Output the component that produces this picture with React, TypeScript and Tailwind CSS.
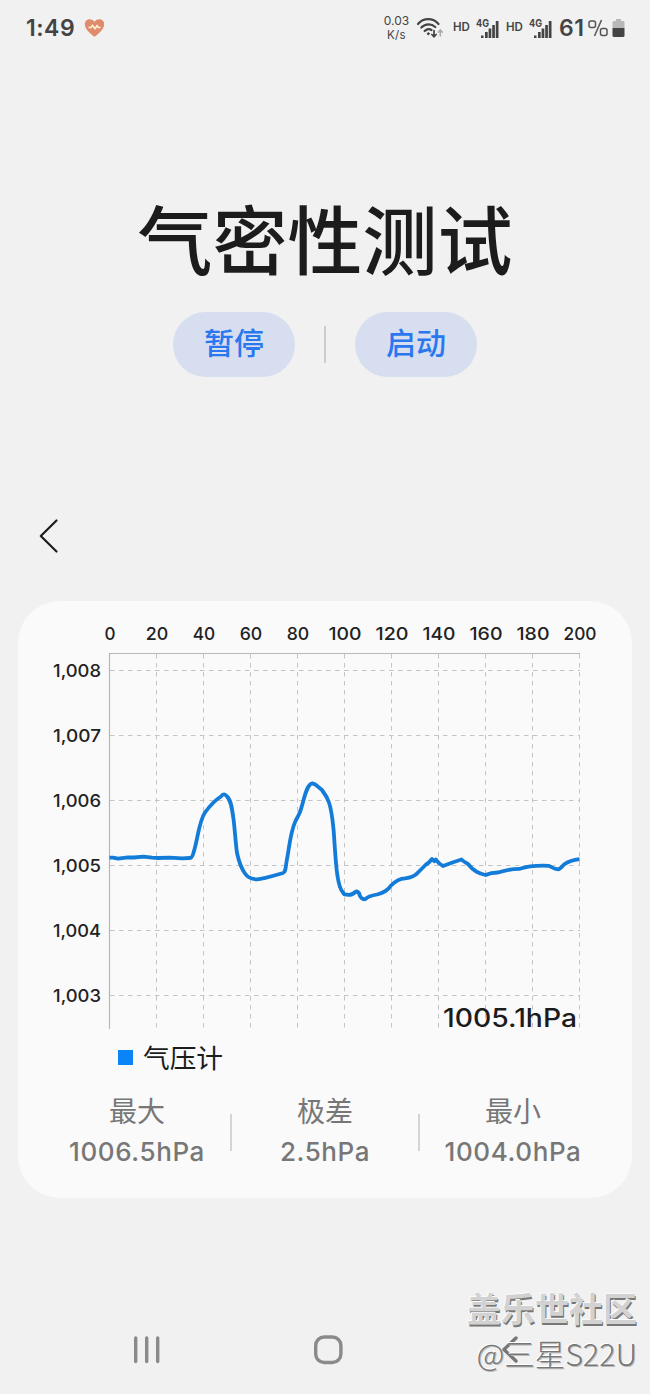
import React from "react";

const X_TICKS = [0, 20, 40, 60, 80, 100, 120, 140, 160, 180, 200];
const Y_TICKS = ["1,008", "1,007", "1,006", "1,005", "1,004", "1,003"];

const LABEL_WIDTHS = [11, 22.5, 33];

const CURVE =
  "M109.5 857.7 L113 857.7 L118 858.6 L128 857.3 L134 857.5 L143.500 856.700 L152 857.6 L158 858 L170 857.700 L182 858.3 L190 858 C192 858 193 855 194 851 C198 838 199 821 205 812.5 C209 807 213 801.500 221 796.500 C223 793.5 225 794 227 796.500 C231 800 232 808 233.500 819 C235 831 235.500 842 237 853 C239 862 241 868 245 873.500 C248 878 252 879.300 257 879.300 C263 879 271 876.500 283 873 C286 872 285.500 867 287 859 C289 850 290 833 295.500 821 C297 818 299 815 300 812 C304 801 306 784 312.500 783.300 C316 784 318 787 322 790 C328 798 331 803 333.500 829 C335.500 853 336 886 343 892.500 Q344 895 347 894.500 Q351 896 356 891.500 Q359 891.500 360 896 Q362 900 365.500 899 Q368 896 377 894.500 Q387 892 391 885.500 Q398 878.500 405 878.300 Q414 877.300 418 872.500 L426 864.500 Q429 863 432 859 L434.500 861.300 L436 859.600 L439 863.300 L443 866 Q452 862.500 461.500 859.500 Q464 862 468 864 Q475 873 485.500 875 Q491 872.500 498 872.500 Q511 868.500 520 868.800 Q531 865 549 865.800 Q556 869.700 559 869.200 Q561 868 564 864.500 Q570 860.300 579.500 859.200";

function Signal() {
  return (
    <div className="flex h-6 w-[23px] items-start">
      <svg width="23" height="24" viewBox="0 0 23 24" fill="#444">
        <text x="0" y="10.500" fontSize="10.500" fontWeight="700" textLength="13" lengthAdjust="spacingAndGlyphs">4G</text>
        <rect x="5" y="19.500" width="2.500" height="2.500" />
        <rect x="9" y="16" width="2.700" height="6" />
        <rect x="12.600" y="12.500" width="2.700" height="9.500" />
        <rect x="16.200" y="9" width="2.700" height="13" />
        <rect x="19.800" y="5" width="2.700" height="17" />
      </svg>
    </div>
  );
}

function StatusBar() {
  return (
    <header className="flex h-[56px] items-center pl-[26px] pr-[25px] text-[#444]">
      <span className="w-[50px] whitespace-nowrap text-[23px] font-semibold leading-none tracking-[0.5px]">1:49</span>
      <svg className="ml-[8px]" width="21" height="20" viewBox="0 0 21 20">
        <path d="M10.500 18.800 C7 16 .8 11.500 .8 6 C.8 .8 7.500 -.5 10.500 3.700 C13.500 -.5 20.200 .8 20.200 6 C20.200 11.500 14 16 10.500 18.800Z" fill="#df8c6c" />
        <path d="M4.500 9.500 H7 L8.500 7.200 L11 10.800 L13 7.500 L14.300 9.500 H16.500" fill="none" stroke="#fff0dc" strokeWidth="1.500" strokeLinejoin="round" />
      </svg>
      <div className="ml-auto flex items-center">
        <div className="flex w-[27px] flex-col items-center text-[12px] leading-[14px]">
          <span className="whitespace-nowrap">0.03</span>
          <span className="whitespace-nowrap text-[11.500px] tracking-[0.3px]">K/s</span>
        </div>
        <svg className="ml-[7px]" width="27" height="24" viewBox="0 0 27 24" fill="none" stroke="#444" strokeWidth="2.200" strokeLinecap="round">
          <path d="M1 8 C6.500 1.500 16 1.500 21.500 8 M4.300 11.500 C8.500 7.300 14.300 7.300 18.300 11 M7.700 15 C10 12.800 12.500 12.800 14.500 14" />
          <circle cx="11.300" cy="17.700" r="1" fill="#444" strokeWidth="1" />
          <path d="M17 14.500 V20 M14.800 18.500 L17 20.700 L19.200 18.500" strokeWidth="1.700" />
          <path d="M23.300 20 V14.500 M21.300 16.300 L23.300 14 L25.300 16.300" stroke="#aaa" strokeWidth="1.500" />
        </svg>
        <span className="ml-[9px] w-[16px] text-[11.500px] font-semibold">HD</span>
        <div className="ml-[7px]"><Signal /></div>
        <span className="ml-[7px] w-[16px] text-[11.500px] font-semibold">HD</span>
        <div className="ml-[7px]"><Signal /></div>
        <div className="ml-[7px] flex w-[50px] items-center whitespace-nowrap leading-none">
          <span className="w-[29px] shrink-0 text-[23px] font-semibold tracking-[0.6px]">61</span>
          <svg className="shrink-0" width="21" height="20" viewBox="0 0 21 20" fill="none" stroke="#555" strokeWidth="1.500">
            <rect x="1" y="3" width="6.500" height="6.500" rx="2" />
            <rect x="12.500" y="10.500" width="6.500" height="7" rx="2" />
            <path d="M13.500 2 L6.500 18" />
          </svg>
        </div>
        <svg className="ml-[3px]" width="13" height="20" viewBox="0 0 13 20">
          <path d="M1.500 3 H4 V1 H9 V3 H11.500 L12.500 4 V10 H.5 V4Z" fill="#b8b8b8" />
          <path d="M.5 10 H12.500 V17.500 Q12.500 19 11 19 H2 Q.5 19 .5 17.500Z" fill="#444" />
        </svg>
      </div>
    </header>
  );
}

function PillButton({ children }: { children: string }) {
  return (
    <button className="flex h-[65px] w-[122px] items-center justify-center rounded-full bg-[#d7def0] pb-[3px] text-[30px] font-medium leading-none text-[#2b78ee]">
      {children}
    </button>
  );
}

function Chart() {
  return (
    <svg className="block" width="614" height="480" viewBox="18 601 614 480">
      <g fill="#222" fontSize="17.500" fontWeight="500">
        {X_TICKS.map((t, i) => (
          <text key={t} x={110 + i * 47} y="640" textAnchor="middle" textLength={LABEL_WIDTHS[String(t).length - 1]} lengthAdjust="spacingAndGlyphs">
            {t}
          </text>
        ))}
        {Y_TICKS.map((t, i) => (
          <text key={t} x="53" y={676.5 + i * 65} textLength="48" lengthAdjust="spacingAndGlyphs">
            {t}
          </text>
        ))}
      </g>
      <g stroke="#c4c4c4" strokeWidth="1" strokeDasharray="4.500 4.500">
        {X_TICKS.slice(1).map((t, i) => (
          <path key={t} d={`M${156.5 + i * 47} 654 V1029`} />
        ))}
        {Y_TICKS.map((t, i) => (
          <path key={t} d={`M110 ${670.5 + i * 65} H580`} />
        ))}
      </g>
      <path d="M109.500 1029 V653.500 H580" fill="none" stroke="#b8b8b8" strokeWidth="1.200" />
      <path d={CURVE} fill="none" stroke="#137bd8" strokeWidth="3.800" strokeLinejoin="round" />
      <text x="443" y="1027" fill="#1c1c1c" fontSize="25" fontWeight="500" textLength="134" lengthAdjust="spacingAndGlyphs">1005.1hPa</text>
      <rect x="118" y="1050" width="15" height="15" fill="#0b84f8" />
      <text x="143" y="1067.500" fill="#1c1c1c" fontSize="26.700">气压计</text>
    </svg>
  );
}

function Stat({ label, value }: { label: string; value: string }) {
  return (
    <div className="flex w-[188px] flex-col items-center text-[#777]">
      <span className="text-[28px] leading-[40px]">{label}</span>
      <span className="whitespace-nowrap text-[26px] font-medium leading-[40px] tracking-[0.6px]">{value}</span>
    </div>
  );
}

function Watermark() {
  return (
    <div className="absolute right-[13px] top-[1290px] flex flex-col items-end whitespace-nowrap">
      <span className="text-[34px] font-bold leading-[40px] text-[#d2d2d2] [text-shadow:-1px_-1px_0_#fafafa,1px_2px_0_#777]">盖乐世社区</span>
      <span className="mt-[4px] font-['Noto_Sans_CJK_SC',sans-serif] text-[30.500px] font-light leading-[38px] text-[#777] [text-shadow:-1px_-1px_0_#ffffff,1px_1px_0_#bbb]">@三星S22U</span>
    </div>
  );
}

export default function App() {
  return (
    <div className="relative flex h-[1394px] w-[650px] flex-col overflow-hidden bg-[#f1f1f1] font-[Inter,'Noto_Sans_CJK_SC',sans-serif]">
      <StatusBar />
      <h1 className="mt-[132px] text-center text-[75px] font-medium leading-[108px] text-[#1c1c1c]">气密性测试</h1>
      <div className="mt-[16px] flex items-center justify-center">
        <PillButton>暂停</PillButton>
        <div className="mx-[29px] h-[37px] w-[2px] bg-[#ccc]" />
        <PillButton>启动</PillButton>
      </div>
      <button className="ml-[38px] mt-[141px] h-[36px] w-[22px]" aria-label="返回">
        <svg width="22" height="36" viewBox="0 0 22 36" fill="none" stroke="#1c1c1c" strokeWidth="2.200" strokeLinecap="round" strokeLinejoin="round">
          <path d="M18.500 2.500 L2.800 18 L18.500 33.500" />
        </svg>
      </button>
      <main className="mx-[18px] mt-[47px] h-[597px] rounded-[42px] bg-[#fafafa]">
        <Chart />
        <div className="mt-[11px] flex items-center justify-center">
          <Stat label="最大" value="1006.5hPa" />
          <div className="-mx-px h-[37px] w-[2px] bg-[#d4d4d4]" />
          <Stat label="极差" value="2.5hPa" />
          <div className="-mx-px h-[37px] w-[2px] bg-[#d4d4d4]" />
          <Stat label="最小" value="1004.0hPa" />
        </div>
      </main>
      <nav className="mt-[128px] flex h-[48px] items-center pl-[132px]">
        <svg width="30" height="30" viewBox="0 0 30 30" stroke="#8a8a8a" strokeWidth="3.400" strokeLinecap="round">
          <path d="M3.700 3 V26.500 M14.700 3 V26.500 M25.700 3 V26.500" />
        </svg>
        <svg className="ml-[150px]" width="32" height="32" viewBox="0 0 32 32" fill="none" stroke="#8a8a8a" strokeWidth="3.400">
          <rect x="3.700" y="3" width="25.200" height="25.500" rx="8.500" />
        </svg>
        <svg className="ml-[157px]" width="20" height="30" viewBox="0 0 20 30" fill="none" stroke="#777" strokeWidth="3.400" strokeLinecap="round" strokeLinejoin="round">
          <path d="M15 3 L3 14.500 L15 26" />
        </svg>
      </nav>
      <Watermark />
    </div>
  );
}
